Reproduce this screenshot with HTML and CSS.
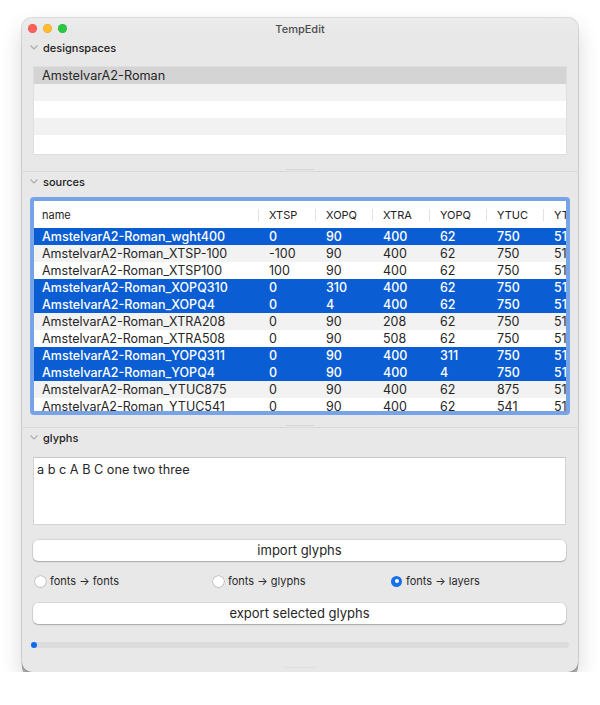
FILE: index.html
```html
<!DOCTYPE html>
<html>
<head>
<meta charset="utf-8">
<title>TempEdit</title>
<link rel="stylesheet" href="styles.css">
</head>
<body>
<div class="window">
  <div class="titlebar">
    <div class="lights"><span class="light red"></span><span class="light yellow"></span><span class="light green"></span></div>
    <div class="title">TempEdit</div>
    <div></div>
  </div>

  <div class="sec-header"><svg class="chev" width="8" height="5" viewBox="0 0 8 5"><path d="M0.5 0.5 L4 4 L7.5 0.5"/></svg><span>designspaces</span></div>
  <div class="ds-list">
    <div class="ds-row sel">AmstelvarA2-Roman</div>
    <div class="ds-row alt"></div>
    <div class="ds-row"></div>
    <div class="ds-row alt"></div>
    <div class="ds-row"></div>
  </div>
  <div class="splitter first"><span class="handle"></span><span class="line"></span></div>

  <div class="sec-header"><svg class="chev" width="8" height="5" viewBox="0 0 8 5"><path d="M0.5 0.5 L4 4 L7.5 0.5"/></svg><span>sources</span></div>
  <div class="table-ring">
    <div class="table">
      <div class="trow head">
        <div class="cell"><span class="htxt">name</span></div>
        <div class="cell"><span class="htxt sep">XTSP</span></div>
        <div class="cell"><span class="htxt sep">XOPQ</span></div>
        <div class="cell"><span class="htxt sep">XTRA</span></div>
        <div class="cell"><span class="htxt sep">YOPQ</span></div>
        <div class="cell"><span class="htxt sep">YTUC</span></div>
        <div class="cell"><span class="htxt sep">YTLC</span></div>
      </div>
      <div class="trow sel"><div class="cell">AmstelvarA2-Roman_wght400</div><div class="cell">0</div><div class="cell">90</div><div class="cell">400</div><div class="cell">62</div><div class="cell">750</div><div class="cell">515</div></div>
      <div class="trow alt"><div class="cell">AmstelvarA2-Roman_XTSP-100</div><div class="cell">-100</div><div class="cell">90</div><div class="cell">400</div><div class="cell">62</div><div class="cell">750</div><div class="cell">515</div></div>
      <div class="trow"><div class="cell">AmstelvarA2-Roman_XTSP100</div><div class="cell">100</div><div class="cell">90</div><div class="cell">400</div><div class="cell">62</div><div class="cell">750</div><div class="cell">515</div></div>
      <div class="trow sel"><div class="cell">AmstelvarA2-Roman_XOPQ310</div><div class="cell">0</div><div class="cell">310</div><div class="cell">400</div><div class="cell">62</div><div class="cell">750</div><div class="cell">515</div></div>
      <div class="trow sel"><div class="cell">AmstelvarA2-Roman_XOPQ4</div><div class="cell">0</div><div class="cell">4</div><div class="cell">400</div><div class="cell">62</div><div class="cell">750</div><div class="cell">515</div></div>
      <div class="trow alt"><div class="cell">AmstelvarA2-Roman_XTRA208</div><div class="cell">0</div><div class="cell">90</div><div class="cell">208</div><div class="cell">62</div><div class="cell">750</div><div class="cell">515</div></div>
      <div class="trow"><div class="cell">AmstelvarA2-Roman_XTRA508</div><div class="cell">0</div><div class="cell">90</div><div class="cell">508</div><div class="cell">62</div><div class="cell">750</div><div class="cell">515</div></div>
      <div class="trow sel"><div class="cell">AmstelvarA2-Roman_YOPQ311</div><div class="cell">0</div><div class="cell">90</div><div class="cell">400</div><div class="cell">311</div><div class="cell">750</div><div class="cell">515</div></div>
      <div class="trow sel"><div class="cell">AmstelvarA2-Roman_YOPQ4</div><div class="cell">0</div><div class="cell">90</div><div class="cell">400</div><div class="cell">4</div><div class="cell">750</div><div class="cell">515</div></div>
      <div class="trow alt"><div class="cell">AmstelvarA2-Roman_YTUC875</div><div class="cell">0</div><div class="cell">90</div><div class="cell">400</div><div class="cell">62</div><div class="cell">875</div><div class="cell">515</div></div>
      <div class="trow"><div class="cell">AmstelvarA2-Roman_YTUC541</div><div class="cell">0</div><div class="cell">90</div><div class="cell">400</div><div class="cell">62</div><div class="cell">541</div><div class="cell">515</div></div>
    </div>
  </div>
  <div class="splitter second"><span class="handle"></span><span class="line"></span></div>

  <div class="sec-header"><svg class="chev" width="8" height="5" viewBox="0 0 8 5"><path d="M0.5 0.5 L4 4 L7.5 0.5"/></svg><span>glyphs</span></div>
  <div class="textbox">a b c A B C one two three</div>
  <div class="button import">import glyphs</div>
  <div class="radios">
    <label class="radio"><span class="dot"></span><span>fonts → fonts</span></label>
    <label class="radio"><span class="dot"></span><span>fonts → glyphs</span></label>
    <label class="radio on"><span class="dot"></span><span>fonts → layers</span></label>
  </div>
  <div class="button export">export selected glyphs</div>
  <div class="progress"><span class="knob"></span></div>
  <div class="bottom-handle"></div>
</div>
</body>
</html>
```

FILE: styles.css
```css
html, body {
  margin: 0;
  padding: 0;
  background: #ffffff;
}

body {
  font-family: Inter, "Noto Sans", "Liberation Sans", sans-serif;
  color: #262626;
}

.window {
  margin: 18px 0 0 22px;
  width: 556px;
  height: 654px;
  background: #e8e8e8;
  border-radius: 10px;
  overflow: hidden;
  display: flex;
  flex-direction: column;
  box-shadow: 0 0 0 1px rgba(0,0,0,0.13), 0 5px 0 #a7a7a7, 0 10px 22px rgba(0,0,0,0.16);
}

.titlebar {
  height: 20px;
  flex: none;
  display: grid;
  grid-template-columns: 1fr auto 1fr;
  align-items: center;
  background: linear-gradient(#ececec, #e7e7e7);
}

.lights {
  display: flex;
  gap: 6px;
  padding-left: 6px;
  padding-top: 1px;
}

.light {
  width: 9px;
  height: 9px;
  border-radius: 50%;
  box-shadow: inset 0 0 0 0.5px rgba(0,0,0,0.12);
}
.red { background: #fe5f57; }
.yellow { background: #febc2e; }
.green { background: #28c840; }

.title {
  font-size: 11px;
  font-weight: 500;
  color: #4d4d4d;
  padding-top: 1px;
}

.sec-header {
  height: 19px;
  flex: none;
  display: flex;
  align-items: center;
  padding-left: 8px;
  gap: 5px;
  font-size: 11px;
  font-weight: 500;
  color: #222;
}

.chev path {
  fill: none;
  stroke: #ababab;
  stroke-width: 1.1;
}

.ds-list {
  margin: 9px 11px 0 11px;
  height: 89px;
  box-sizing: border-box;
  border: 1px solid #dedede;
  background: #ffffff;
  flex: none;
}

.ds-row {
  height: 17px;
  line-height: 17px;
  padding-left: 8px;
  font-size: 12.7px;
  color: #262626;
}
.ds-row.alt { background: #f1f2f1; }
.ds-row.sel { background: #d4d4d4; }

.splitter {
  flex: none;
  display: flex;
  flex-direction: column;
  align-items: center;
  gap: 1px;
}
.splitter.first { margin-top: 14px; }
.splitter.second { margin-top: 10px; }
.splitter .handle {
  width: 28px;
  height: 1px;
  background: #d6d6d6;
}
.splitter .line {
  align-self: stretch;
  height: 1px;
  background: #dadada;
}

.table-ring {
  flex: none;
  margin: 6px 8px 0 8px;
  height: 218px;
  box-sizing: border-box;
  border: 4px solid #77a3e9;
  border-radius: 4px;
  overflow: hidden;
  background: #fff;
}

.table {
  height: 210px;
  overflow: hidden;
}

.trow {
  display: grid;
  grid-template-columns: 224px repeat(6, 57px);
  height: 17px;
  align-items: center;
  font-size: 12.5px;
  color: #262626;
  white-space: nowrap;
}
.trow.head {
  height: 27px;
  font-size: 11px;
  color: #222;
}
.trow.alt { background: #f1f2f1; }
.trow.sel { background: #0a5dd2; color: #ffffff; font-weight: 500; }

.cell {
  padding-left: 11px;
  overflow: hidden;
  line-height: 17px;
}
.cell:first-child { padding-left: 8px; }
.head .cell { padding-left: 0; display: flex; }
.head .cell:first-child { padding-left: 8px; }
.htxt {
  display: block;
  line-height: 12px;
}
.htxt.sep {
  border-left: 1px solid #e2e2e2;
  padding-left: 10px;
}

.textbox {
  flex: none;
  margin: 10px 12px 0 11px;
  height: 68px;
  box-sizing: border-box;
  border: 1px solid #d3d3d3;
  border-top-color: #c8c8c8;
  background: #fff;
  padding: 3px 3px;
  font-size: 12.7px;
  line-height: 17px;
  color: #262626;
}

.button {
  flex: none;
  height: 21px;
  margin: 15px 12px 0 11px;
  background: #fff;
  border-radius: 5px;
  box-shadow: 0 0 0 0.5px rgba(0,0,0,0.14), 0 1px 1.5px rgba(0,0,0,0.22);
  text-align: center;
  font-size: 13px;
  line-height: 21px;
  color: #262626;
}

.radios {
  flex: none;
  margin: 13px 9px 0 13px;
  height: 14px;
  display: grid;
  grid-template-columns: repeat(3, 1fr);
}

.radio {
  display: flex;
  align-items: center;
  gap: 4px;
  font-size: 11px;
  color: #2a2a2a;
}

.radio .dot {
  width: 11px;
  height: 11px;
  box-sizing: border-box;
  border-radius: 50%;
  background: #fff;
  box-shadow: 0 0 0 0.5px rgba(0,0,0,0.28), 0 0.5px 1px rgba(0,0,0,0.15);
  display: flex;
  align-items: center;
  justify-content: center;
}
.radio.on .dot {
  background: #1670ea;
  box-shadow: none;
}
.radio.on .dot::after {
  content: "";
  width: 4px;
  height: 4px;
  border-radius: 50%;
  background: #fff;
}

.button.export { margin-top: 15px; }

.progress {
  flex: none;
  margin: 18px 9px 0 9px;
  height: 6px;
  border-radius: 3px;
  background: #dcdcdc;
  display: flex;
}
.progress .knob {
  width: 6px;
  height: 6px;
  border-radius: 50%;
  background: #0c6cf0;
}

.bottom-handle {
  flex: none;
  margin: 19px auto 0 auto;
  width: 30px;
  height: 1px;
  background: #dedede;
}
```
